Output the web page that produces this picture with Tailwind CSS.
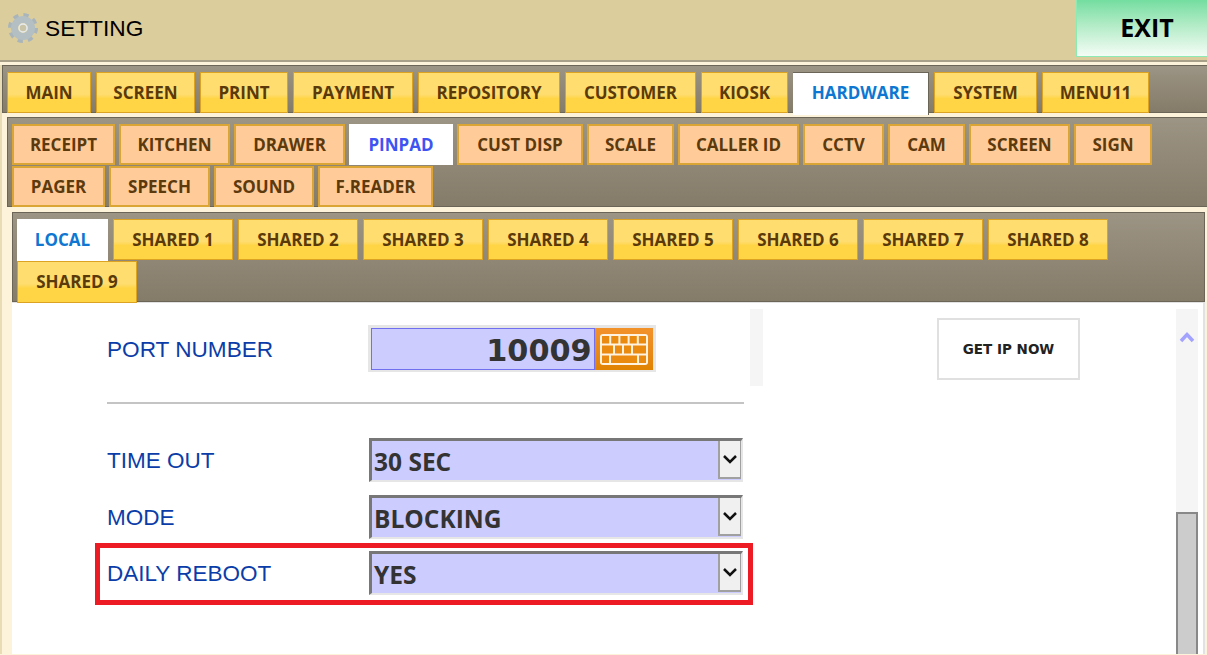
<!DOCTYPE html>
<html lang="en">
<head>
  <meta charset="UTF-8" />
  <title>Setting</title>
  <script src="https://cdn.jsdelivr.net/npm/@tailwindcss/browser@4"></script>
</head>
<body class="bg-[#fdf3da] w-[1207px] h-[655px] overflow-hidden font-['Open_Sans',sans-serif]">
  <!-- header -->
  <header class="h-[60px] bg-[#dccd9d] flex items-center justify-between border-b-2 border-[#a9a08a] box-content">
    <div class="flex items-center pl-[8px] -mt-[4px]">
      <svg class="w-[30px] h-[30px]" viewBox="0 0 30 30">
        <circle cx="15" cy="15" r="12.5" fill="none" stroke="#a9b5ba" stroke-width="5" stroke-dasharray="5 4.82"/>
        <circle cx="15" cy="15" r="8.5" fill="none" stroke="#b3bfc3" stroke-width="7"/>
        <circle cx="15" cy="15" r="4" fill="#c9c4a8" stroke="#e6ebec" stroke-width="1.5"/>
      </svg>
      <span class="ml-[7px] text-[22.7px] text-black font-['Liberation_Sans',sans-serif]">SETTING</span>
    </div>
    <button class="w-[131px] h-[57px] -mt-[3px] pl-[10px] bg-linear-to-b from-[#73dda0] to-[#f4fcf6] border-l border-b border-[#8eeab4] text-[25px] font-bold text-black">EXIT</button>
  </header>

  <div class="border-l-2 border-[#e8dcb5]">
    <!-- main tabs -->
    <nav class="mt-[3px] h-[48px] pt-[6px] pl-[4px] flex gap-[5px] bg-linear-to-b from-[#9c9484] to-[#857b69] border-t border-l border-b border-[#6b6558] text-[17px] font-bold text-[#5a3a08]">
      <a class="w-[84px] h-[41px] flex items-center justify-center border border-[#dca322] bg-linear-to-b from-[#ffdd6e] from-55% to-[#ffd546] to-65%">MAIN</a>
      <a class="w-[99px] h-[41px] flex items-center justify-center border border-[#dca322] bg-linear-to-b from-[#ffdd6e] from-55% to-[#ffd546] to-65%">SCREEN</a>
      <a class="w-[88px] h-[41px] flex items-center justify-center border border-[#dca322] bg-linear-to-b from-[#ffdd6e] from-55% to-[#ffd546] to-65%">PRINT</a>
      <a class="w-[120px] h-[41px] flex items-center justify-center border border-[#dca322] bg-linear-to-b from-[#ffdd6e] from-55% to-[#ffd546] to-65%">PAYMENT</a>
      <a class="w-[142px] h-[41px] flex items-center justify-center border border-[#dca322] bg-linear-to-b from-[#ffdd6e] from-55% to-[#ffd546] to-65%">REPOSITORY</a>
      <a class="w-[131px] h-[41px] flex items-center justify-center border border-[#dca322] bg-linear-to-b from-[#ffdd6e] from-55% to-[#ffd546] to-65%">CUSTOMER</a>
      <a class="w-[87px] h-[41px] flex items-center justify-center border border-[#dca322] bg-linear-to-b from-[#ffdd6e] from-55% to-[#ffd546] to-65%">KIOSK</a>
      <a class="w-[136px] h-[43px] pb-[2px] flex items-center justify-center bg-white text-[#0e77d1] border-r border-t border-[#6b6558]">HARDWARE</a>
      <a class="w-[103px] h-[41px] flex items-center justify-center border border-[#dca322] bg-linear-to-b from-[#ffdd6e] from-55% to-[#ffd546] to-65%">SYSTEM</a>
      <a class="w-[107px] h-[41px] flex items-center justify-center border border-[#dca322] bg-linear-to-b from-[#ffdd6e] from-55% to-[#ffd546] to-65%">MENU11</a>
    </nav>

    <!-- hardware tabs -->
    <nav class="ml-[5px] mt-[4px] h-[90px] pt-[6px] pl-[4px] flex flex-wrap content-start gap-x-[4px] gap-y-[1px] bg-linear-to-b from-[#9c9484] to-[#857b69] border-t border-l border-b border-[#6b6558] text-[17px] font-bold text-[#5c3a0d]">
      <a class="w-[103px] h-[41px] flex items-center justify-center border-2 border-[#dba535] bg-[#ffcc99]">RECEIPT</a>
      <a class="w-[111px] h-[41px] flex items-center justify-center border-2 border-[#dba535] bg-[#ffcc99]">KITCHEN</a>
      <a class="w-[111px] h-[41px] flex items-center justify-center border-2 border-[#dba535] bg-[#ffcc99]">DRAWER</a>
      <a class="w-[104px] h-[41px] flex items-center justify-center bg-white text-[#3d53f2]">PINPAD</a>
      <a class="w-[126px] h-[41px] flex items-center justify-center border-2 border-[#dba535] bg-[#ffcc99]">CUST DISP</a>
      <a class="w-[87px] h-[41px] flex items-center justify-center border-2 border-[#dba535] bg-[#ffcc99]">SCALE</a>
      <a class="w-[121px] h-[41px] flex items-center justify-center border-2 border-[#dba535] bg-[#ffcc99]">CALLER ID</a>
      <a class="w-[81px] h-[41px] flex items-center justify-center border-2 border-[#dba535] bg-[#ffcc99]">CCTV</a>
      <a class="w-[77px] h-[41px] flex items-center justify-center border-2 border-[#dba535] bg-[#ffcc99]">CAM</a>
      <a class="w-[101px] h-[41px] flex items-center justify-center border-2 border-[#dba535] bg-[#ffcc99]">SCREEN</a>
      <a class="w-[78px] h-[41px] flex items-center justify-center border-2 border-[#dba535] bg-[#ffcc99]">SIGN</a>
      <a class="w-[93px] h-[41px] flex items-center justify-center border-2 border-[#dba535] bg-[#ffcc99]">PAGER</a>
      <a class="w-[101px] h-[41px] flex items-center justify-center border-2 border-[#dba535] bg-[#ffcc99]">SPEECH</a>
      <a class="w-[100px] h-[41px] flex items-center justify-center border-2 border-[#dba535] bg-[#ffcc99]">SOUND</a>
      <a class="w-[115px] h-[41px] flex items-center justify-center border-2 border-[#dba535] bg-[#ffcc99]">F.READER</a>
    </nav>

    <!-- pinpad tabs -->
    <nav class="ml-[10px] mr-[2px] mt-[5px] h-[90px] pt-[6px] pl-[4px] flex flex-wrap content-start gap-x-[5px] bg-linear-to-b from-[#9c9484] to-[#857b69] border-t border-l border-r border-b border-[#6b6558] text-[17px] font-bold text-[#5a3a08]">
      <a class="w-[91px] h-[42px] flex items-center justify-center bg-white text-[#0e77d1]">LOCAL</a>
      <a class="w-[120px] h-[41px] flex items-center justify-center border border-[#dca322] bg-linear-to-b from-[#ffdd6e] from-55% to-[#ffd546] to-65%">SHARED 1</a>
      <a class="w-[120px] h-[41px] flex items-center justify-center border border-[#dca322] bg-linear-to-b from-[#ffdd6e] from-55% to-[#ffd546] to-65%">SHARED 2</a>
      <a class="w-[120px] h-[41px] flex items-center justify-center border border-[#dca322] bg-linear-to-b from-[#ffdd6e] from-55% to-[#ffd546] to-65%">SHARED 3</a>
      <a class="w-[120px] h-[41px] flex items-center justify-center border border-[#dca322] bg-linear-to-b from-[#ffdd6e] from-55% to-[#ffd546] to-65%">SHARED 4</a>
      <a class="w-[120px] h-[41px] flex items-center justify-center border border-[#dca322] bg-linear-to-b from-[#ffdd6e] from-55% to-[#ffd546] to-65%">SHARED 5</a>
      <a class="w-[120px] h-[41px] flex items-center justify-center border border-[#dca322] bg-linear-to-b from-[#ffdd6e] from-55% to-[#ffd546] to-65%">SHARED 6</a>
      <a class="w-[120px] h-[41px] flex items-center justify-center border border-[#dca322] bg-linear-to-b from-[#ffdd6e] from-55% to-[#ffd546] to-65%">SHARED 7</a>
      <a class="w-[120px] h-[41px] flex items-center justify-center border border-[#dca322] bg-linear-to-b from-[#ffdd6e] from-55% to-[#ffd546] to-65%">SHARED 8</a>
      <a class="w-[120px] h-[42px] flex items-center justify-center border border-[#dca322] bg-linear-to-b from-[#ffdd6e] from-55% to-[#ffd546] to-65%">SHARED 9</a>
    </nav>

    <!-- content -->
    <main class="ml-[10px] mr-[2px] h-[352px] bg-white flex overflow-hidden border-t border-r-2 border-[#e2e2e2] font-['Liberation_Sans',sans-serif]">
      <div class="w-[751px] shrink-0 pl-[95px]">
        <div class="flex h-[84px]">
          <div class="flex pt-[23px] w-[656px]">
            <label class="w-[261px] text-[22.6px] leading-[48px] text-[#0b3da8]">PORT NUMBER</label>
            <div class="w-[288px] h-[47px] -mt-[1px] bg-[#e6e6e6] flex p-[3px] pb-[2px]">
              <div class="w-[226px] bg-[#ccccff] border border-[#6f6ff0] flex items-center justify-end pr-[2px] pt-[3px] font-['DejaVu_Sans',sans-serif] font-bold text-[30.3px] text-[#333333]">10009</div>
              <div class="w-[59px] bg-linear-to-b from-[#f2922a] to-[#e08300] flex items-center justify-center">
                <svg class="w-[48px] h-[31px]" viewBox="0 0 48 31">
                  <rect width="48" height="31" rx="3" fill="#fff2df"/>
                  <g fill="#ea8a0e">
                    <rect x="2" y="2" width="7.2" height="7.5"/><rect x="11.2" y="2" width="7.2" height="7.5"/><rect x="20.4" y="2" width="7.2" height="7.5"/><rect x="29.6" y="2" width="7.2" height="7.5"/><rect x="38.8" y="2" width="7.2" height="7.5"/>
                    <rect x="2" y="11.5" width="11" height="8"/><rect x="15" y="11.5" width="7" height="8"/><rect x="24" y="11.5" width="7" height="8"/><rect x="33" y="11.5" width="13" height="8"/>
                    <rect x="2" y="21.5" width="7" height="7.5"/><rect x="11" y="21.5" width="26" height="7.5"/><rect x="39" y="21.5" width="7" height="7.5"/>
                  </g>
                </svg>
              </div>
            </div>
          </div>
          <div class="w-[13px] h-[77px] mt-[6px] -ml-[12px] bg-[#f5f5f5]"></div>
        </div>
        <div class="h-[2px] w-[637px] mt-[15px] bg-[#c4c4c4]"></div>

        <div class="flex h-[46px] mt-[34px]">
          <label class="w-[262px] self-center text-[22.5px] text-[#0b3da8]">TIME OUT</label>
          <div class="w-[374px] h-[44px] bg-[#ccccff] border-t-[3px] border-l-[3px] border-[#777777] border-r-2 border-r-[#e6e6e6] border-b-2 border-b-[#e6e6e6] flex justify-between font-['Open_Sans',sans-serif] font-bold text-[24.5px] text-[#333333] pl-[2px]">
            <span class="pt-[3px] self-center">30 SEC</span>
            <span class="w-[23px] h-[38px] bg-[#f0f0f0] border-l-2 border-b-2 border-r border-[#a0a0a0] flex items-center justify-center">
              <svg class="w-[14px] h-[10px]" viewBox="0 0 14 10"><path d="M1 2 L7 8 L13 2" fill="none" stroke="#111" stroke-width="2.5"/></svg>
            </span>
          </div>
        </div>

        <div class="flex h-[46px] mt-[11px]">
          <label class="w-[262px] self-center text-[22.5px] text-[#0b3da8]">MODE</label>
          <div class="w-[374px] h-[44px] bg-[#ccccff] border-t-[3px] border-l-[3px] border-[#777777] border-r-2 border-r-[#e6e6e6] border-b-2 border-b-[#e6e6e6] flex justify-between font-['Open_Sans',sans-serif] font-bold text-[24.5px] text-[#333333] pl-[2px]">
            <span class="pt-[3px] self-center">BLOCKING</span>
            <span class="w-[23px] h-[38px] bg-[#f0f0f0] border-l-2 border-b-2 border-r border-[#a0a0a0] flex items-center justify-center">
              <svg class="w-[14px] h-[10px]" viewBox="0 0 14 10"><path d="M1 2 L7 8 L13 2" fill="none" stroke="#111" stroke-width="2.5"/></svg>
            </span>
          </div>
        </div>

        <div class="flex h-[62px] mt-[2px] -ml-[12px] w-[658px] border-[5px] border-[#ed1c24] pl-[7px]">
          <label class="w-[262px] self-center text-[22.5px] text-[#0b3da8]">DAILY REBOOT</label>
          <div class="w-[374px] h-[44px] mt-[3px] bg-[#ccccff] border-t-[3px] border-l-[3px] border-[#777777] border-r-2 border-r-[#e6e6e6] border-b-2 border-b-[#e6e6e6] flex justify-between font-['Open_Sans',sans-serif] font-bold text-[24.5px] text-[#333333] pl-[2px]">
            <span class="pt-[3px] self-center">YES</span>
            <span class="w-[23px] h-[38px] bg-[#f0f0f0] border-l-2 border-b-2 border-r border-[#a0a0a0] flex items-center justify-center">
              <svg class="w-[14px] h-[10px]" viewBox="0 0 14 10"><path d="M1 2 L7 8 L13 2" fill="none" stroke="#111" stroke-width="2.5"/></svg>
            </span>
          </div>
        </div>
      </div>

      <div class="w-[413px] shrink-0 pl-[174px] pt-[15px]">
        <button class="w-[143px] h-[62px] border-2 border-[#e0e0e0] bg-white text-[13.5px] font-bold text-[#222222] font-['DejaVu_Sans',sans-serif]">GET IP NOW</button>
      </div>

      <div class="w-[22px] shrink-0 mt-[6px] flex flex-col bg-[#f5f5f5]">
        <div class="h-[203px] flex justify-center pt-[22px]">
          <svg class="w-[16px] h-[12px]" viewBox="0 0 16 12"><path d="M2 10 L8 3.5 L14 10" fill="none" stroke="#a3a3ff" stroke-width="3.5"/></svg>
        </div>
        <div class="flex-1 bg-[#cccccc] border-t-2 border-x-2 border-[#888888]"></div>
      </div>
    </main>
  </div>
</body>
</html>
